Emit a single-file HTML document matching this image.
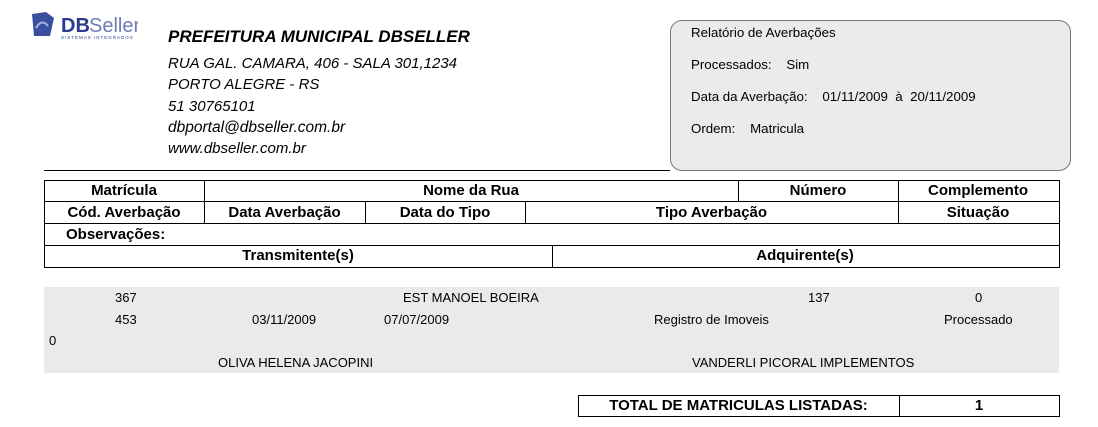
<!DOCTYPE html><html><head><style>
body{margin:0;width:1098px;height:427px;background:#fff;position:relative;font-family:"Liberation Sans",sans-serif;overflow:hidden}
.a{position:absolute;white-space:nowrap}
.i{font-style:italic;font-size:15px;color:#000}
.s{font-size:13.3px}
.b{font-weight:bold;font-size:15px}
.l{position:absolute;background:#000}
.c{position:absolute;text-align:center;font-weight:bold;font-size:15px;white-space:nowrap}
.g{font-size:13px;position:absolute;white-space:nowrap}
</style></head><body>
<svg class="a" style="left:28px;top:10px" width="110" height="32"><path d="M4 4 L18 2 L26 8 L22 26 L6 26 Z" fill="#3b4fa0"/><path d="M8 18 q6 -10 12 -2" stroke="#aab4e0" fill="none" stroke-width="2"/>
<text x="33" y="22" font-family="Liberation Sans" font-weight="bold" font-size="20" fill="#2b3b8f">DB</text><text x="61" y="22" font-family="Liberation Sans" font-size="20" fill="#6f7bb8">Seller</text><text x="33" y="29" font-family="Liberation Sans" font-size="4.5" fill="#2b3b8f" letter-spacing="1">SISTEMAS INTEGRADOS</text></svg>
<div class="a i" style="left:168px;top:27px;font-weight:bold;font-size:17px">PREFEITURA MUNICIPAL DBSELLER</div>
<div class="a i" style="left:168px;top:55px">RUA GAL. CAMARA, 406 - SALA 301,1234</div>
<div class="a i" style="left:168px;top:76px">PORTO ALEGRE - RS</div>
<div class="a i" style="left:168px;top:98px">51 30765101</div>
<div class="a i" style="left:168px;top:119px;font-size:15.5px">dbportal@dbseller.com.br</div>
<div class="a i" style="left:168px;top:140px">www.dbseller.com.br</div>
<div class="l" style="left:44px;top:170px;width:626px;height:1px"></div>
<div class="a" style="left:670px;top:20px;width:399px;height:149px;background:#ebebeb;border:1px solid #777;border-radius:12px"></div>
<div class="a s" style="left:691px;top:25px">Relatório de Averbações</div>
<div class="a s" style="left:691px;top:57px">Processados:&nbsp;&nbsp;&nbsp; Sim</div>
<div class="a s" style="left:691px;top:89px">Data da Averbação:&nbsp;&nbsp;&nbsp; 01/11/2009&nbsp; à&nbsp; 20/11/2009</div>
<div class="a s" style="left:691px;top:121px">Ordem:&nbsp;&nbsp;&nbsp; Matricula</div>
<div class="a" style="left:44px;top:180px;width:1014px;height:86px;border:1px solid #000"></div>
<div class="l" style="left:44px;top:201px;width:1015px;height:1px"></div>
<div class="l" style="left:44px;top:223px;width:1015px;height:1px"></div>
<div class="l" style="left:44px;top:245px;width:1015px;height:1px"></div>
<div class="l" style="left:204px;top:180px;width:1px;height:43px"></div>
<div class="l" style="left:738px;top:180px;width:1px;height:21px"></div>
<div class="l" style="left:898px;top:180px;width:1px;height:43px"></div>
<div class="l" style="left:365px;top:201px;width:1px;height:22px"></div>
<div class="l" style="left:525px;top:201px;width:1px;height:22px"></div>
<div class="l" style="left:552px;top:245px;width:1px;height:22px"></div>
<div class="c" style="left:44px;width:160px;top:182px">Matrícula</div>
<div class="c" style="left:204px;width:534px;top:182px">Nome da Rua</div>
<div class="c" style="left:738px;width:160px;top:182px">Número</div>
<div class="c" style="left:898px;width:160px;top:182px">Complemento</div>
<div class="c" style="left:44px;width:160px;top:204px">Cód. Averbação</div>
<div class="c" style="left:204px;width:161px;top:204px">Data Averbação</div>
<div class="c" style="left:365px;width:160px;top:204px">Data do Tipo</div>
<div class="c" style="left:525px;width:373px;top:204px">Tipo Averbação</div>
<div class="c" style="left:898px;width:160px;top:204px">Situação</div>
<div class="a b" style="left:66px;top:226px">Observações:</div>
<div class="c" style="left:44px;width:508px;top:247px">Transmitente(s)</div>
<div class="c" style="left:552px;width:506px;top:247px">Adquirente(s)</div>
<div class="a" style="left:44px;top:287px;width:1015px;height:86px;background:#eaeaea"></div>
<div class="g" style="left:115px;top:290px">367</div>
<div class="g" style="left:403px;top:290px">EST MANOEL BOEIRA</div>
<div class="g" style="left:808px;top:290px">137</div>
<div class="g" style="left:975px;top:290px">0</div>
<div class="g" style="left:115px;top:312px">453</div>
<div class="g" style="left:252px;top:312px">03/11/2009</div>
<div class="g" style="left:384px;top:312px">07/07/2009</div>
<div class="g" style="left:654px;top:312px">Registro de Imoveis</div>
<div class="g" style="left:944px;top:312px">Processado</div>
<div class="g" style="left:49px;top:333px">0</div>
<div class="g" style="left:218px;top:355px">OLIVA HELENA JACOPINI</div>
<div class="g" style="left:692px;top:355px">VANDERLI PICORAL IMPLEMENTOS</div>
<div class="a" style="left:578px;top:395px;width:480px;height:20px;border:1px solid #000"></div>
<div class="l" style="left:899px;top:395px;width:1px;height:21px"></div>
<div class="c" style="left:578px;width:321px;top:397px">TOTAL DE MATRICULAS LISTADAS:</div>
<div class="c" style="left:899px;width:160px;top:397px">1</div>
</body></html>
